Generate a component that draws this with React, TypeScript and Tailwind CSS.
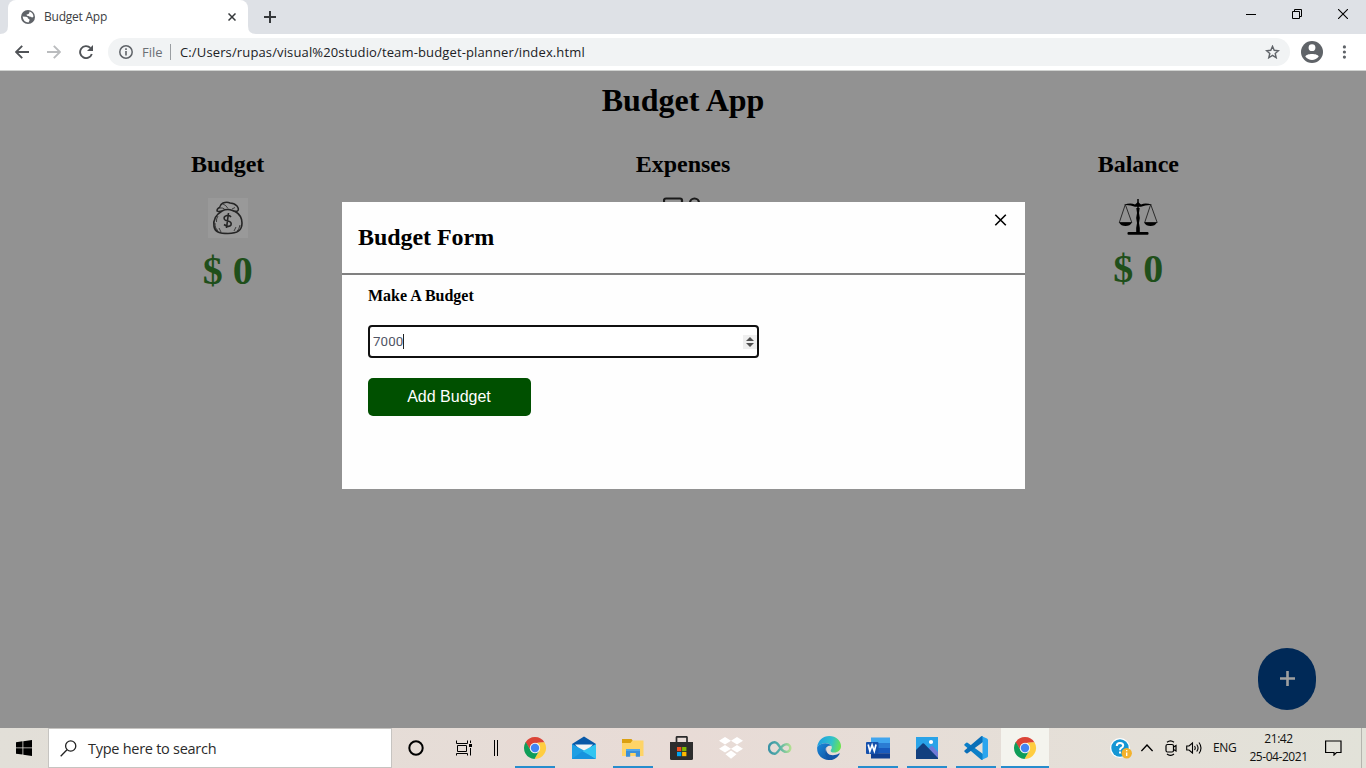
import type { ReactNode } from "react";

const UI = "font-['Open_Sans','Noto_Sans',sans-serif]";

function Chrome() {
  return (
    <svg width="24" height="24" viewBox="0 0 24 24">
      <path d="M2.47 6.5A11 11 0 0 1 21.53 6.5L12 7Q8 7 7.2 13.5Z" fill="#db4437" />
      <path d="M21.4 6.3A11 11 0 0 1 11.5 23L16.4 14.500Q17.500 11 14.500 6.800Z" fill="#ffcd40" />
      <path d="M2.600 6.300A11 11 0 0 0 11.500 23L16.330 14.500Q12 18.500 7.670 14.500L2.900 6.200Z" fill="#0f9d58" />
      <circle cx="12" cy="12" r="5.2" fill="#f1f1f1" />
      <circle cx="12" cy="12" r="4.2" fill="#4285f4" />
    </svg>
  );
}

function Mail() {
  return (
    <svg width="24" height="24" viewBox="0 0 24 24">
      <path d="M0 8 12 0.5 24 8V12H0Z" fill="#0959a8" />
      <path d="M3 8.5H21L12 18Z" fill="#f5f5f5" />
      <path d="M0 8 12 14.5 24 23H0Z" fill="#1d9fe4" />
      <path d="M24 8V23L10.5 15.2Z" fill="#31c5f1" />
      <path d="M10.5 15.2 24 23H0Z" fill="#128cdb" opacity=".6" />
    </svg>
  );
}

function Explorer() {
  return (
    <svg width="24" height="24" viewBox="0 0 24 24">
      <path d="M1 3H10.5L12 5H22V9H1Z" fill="#dba011" />
      <path d="M1 7H9.5L11.5 4.5H22.5V20H1Z" fill="#fed467" />
      <path d="M5 13H19V20.8H14.8V17H9.2V20.8H5Z" fill="#3a8fd8" />
      <path d="M5 13H19V15H5Z" fill="#54a8e8" />
    </svg>
  );
}

function Store() {
  return (
    <svg width="24" height="24" viewBox="0 0 24 24">
      <path d="M6.500 7V1.200Q6.500.8 7.300.8H16.200Q17 .8 17 1.200V7" fill="none" stroke="#2a2a2a" strokeWidth="1.700" />
      <path d="M0 6H23V22.5Q23 24 21.500 24H1.500Q0 24 0 22.5Z" fill="#2d2d2d" />
      <path d="M7 11H11.300V15.200H7Z" fill="#f25022" />
      <path d="M12.100 11H16.400V15.200H12.100Z" fill="#7fba00" />
      <path d="M7 16H11.300V20.200H7Z" fill="#00a4ef" />
      <path d="M12.100 16H16.400V20.200H12.100Z" fill="#ffb900" />
    </svg>
  );
}

function Dropbox() {
  return (
    <svg width="24" height="24" viewBox="0 0 24 24" fill="#fff">
      <path d="M6 1 12 4.8 6 8.6 0 4.8ZM18 1 24 4.8 18 8.6 12 4.8ZM6 9 12 12.8 6 16.6 0 12.8ZM18 9 24 12.8 18 16.6 12 12.8ZM12 14.5 17.5 18.3 12 22.8 6.5 18.3Z" />
    </svg>
  );
}

function Infinity() {
  return (
    <svg width="24" height="24" viewBox="0 0 24 24">
      <defs>
        <linearGradient id="inf">
          <stop offset="0" stopColor="#3b93a6" />
          <stop offset=".5" stopColor="#56b1a8" />
          <stop offset="1" stopColor="#b0df91" />
        </linearGradient>
      </defs>
      <path d="M12.5 12C10.5 8.5 9 6.2 6.700 6.2A5.8 5.8 0 0 0 6.700 17.8C10.5 17.8 12.5 8.3 18.5 8.3A3.8 3.8 0 0 1 18.5 15.9C16 15.9 14 14.2 12.5 12" fill="none" stroke="url(#inf)" strokeWidth="2.400" />
    </svg>
  );
}

function Edge() {
  return (
    <svg width="24" height="24" viewBox="0 0 24 24">
      <defs>
        <linearGradient id="edgeTop" x1="0" y1=".3" x2="1" y2=".5">
          <stop offset="0" stopColor="#1b9de2" />
          <stop offset=".6" stopColor="#32c2c9" />
          <stop offset="1" stopColor="#6be34f" />
        </linearGradient>
        <linearGradient id="edgeBot" x1="0" y1="0" x2="1" y2="1">
          <stop offset="0" stopColor="#1b8bdc" />
          <stop offset="1" stopColor="#0f4a98" />
        </linearGradient>
      </defs>
      <path d="M.2 11C1 4.2 6 0 12.3 0 19 0 24 4.7 24 10c0 4-3 6.5-6.7 6.5-2.7 0-4-1-3.6-2.1.6-1 1.1-1.6 1.1-2.8C14.8 9 12 7.3 8.6 7.3 4.5 7.3 1.5 9.2.2 11Z" fill="url(#edgeTop)" />
      <path d="M.2 11C2 8.3 5 7.2 8.4 7.2c3 0 5 1.2 6 2.8C11 8.6 8.3 11.5 8.3 14.5c0 4.5 4 8 8.3 7.2C15.300 23.200 13.500 24 11.500 24 5 24-.7 18.600.2 11Z" fill="url(#edgeBot)" />
      <path d="M9.300 11.500c-1.500 6 5.200 10.500 13 5.800.4 0 .5.400.3.700C20.500 21.500 17 24 13.800 24 9 23.200 6.500 16.500 9.300 11.500Z" fill="#1257a8" />
    </svg>
  );
}

function Word() {
  return (
    <svg width="24" height="24" viewBox="0 0 24 24">
      <path d="M5 1.500H24V7H5Z" fill="#41a5ee" />
      <path d="M5 7H24V12H5Z" fill="#2b7cd3" />
      <path d="M5 12H24V17.200H5Z" fill="#185abd" />
      <path d="M5 17.200H24V22.500H5Z" fill="#103f91" />
      <rect x="0" y="6" width="12.500" height="12" rx="1" fill="#1550ac" />
      <path d="m2.200 8.500 1.700 6.700 2.200-6.200 2.200 6.200 1.700-6.700" fill="none" stroke="#fff" strokeWidth="1.700" />
    </svg>
  );
}

function Photos() {
  return (
    <svg width="24" height="24" viewBox="0 0 24 24">
      <path d="M1 1H23V23H1Z" fill="#29a3e8" />
      <path d="m13 13 4-3.500 6 6.500V23H13Z" fill="#7079d6" />
      <path d="M1 14 7.500 7.500Q8.500 7 9.500 8L23 22V23H1Z" fill="#123f7e" />
      <circle cx="16" cy="6" r="2.100" fill="#fff" />
    </svg>
  );
}

function Code() {
  return (
    <svg width="24" height="24" viewBox="0 0 24 24">
      <path d="M.500 8.300 2.300 6.700Q3 6.300 3.600 6.800L19 18V23.500L17.500 24 .500 9.500Q0 8.900.500 8.300Z" fill="#0b7fc8" />
      <path d="M.500 15.700 2.300 17.300Q3 17.700 3.600 17.200L19 6V.500L17.500 0 .500 14.500Q0 15.100.500 15.700Z" fill="#0a6fb8" />
      <path d="M17.300 0 23 2.500Q24 3 24 4V20Q24 21 23 21.500L17.300 24Q18.500 23.300 18.500 22V2Q18.500.700 17.300 0Z" fill="#2ba5ee" />
    </svg>
  );
}

function Task({ children, open = false, active = false }: { children: ReactNode; open?: boolean; active?: boolean }) {
  return (
    <div className={active ? "ml-px flex h-10 w-12 flex-col items-center bg-[#f4f4ee]" : "flex h-10 w-[49px] flex-col items-center"}>
      <div className="flex h-[38px] items-center pt-[2px]">{children}</div>
      {open && <div className={active ? "h-[2px] w-full bg-[#278dcd]" : "h-[2px] w-10 bg-[#278dcd]"} />}
    </div>
  );
}

function TabStrip() {
  return (
    <div className="flex h-[34px] items-end bg-[#dee1e6] text-[#202124]">
      <svg width="8" height="34" viewBox="0 0 8 34"><path d="M0 34Q8 34 8 26V34Z" fill="#fff" /></svg>
      <div className="flex h-[34px] w-[240px] items-center rounded-t-lg bg-white pl-[13px]">
        <svg width="14" height="14" viewBox="0 0 14 14">
          <circle cx="7" cy="7" r="7" fill="#5f6368" />
          <path d="M1.600 6.500 5 6.700Q7 7 7 8.500 9 9 8.500 10.500L7.500 12.600Q2.400 12.300 1.600 6.500ZM8.500 1.600Q12 2.600 12.500 6.500 11 8.200 10 6.700 8.500 7 7.500 6 5.500 6 5.500 4.500 8.500 4.500 8.500 1.600Z" fill="#fff" />
        </svg>
        <span className={`${UI} ml-[9px] w-[184px] text-[12px] tracking-[-0.23px] text-[#3c4043]`}>Budget App</span>
        <svg width="8" height="8" viewBox="0 0 8 8"><path d="m.5.5 7 7M7.500.5.5 7.500" stroke="#35383b" strokeWidth="1.500" /></svg>
      </div>
      <svg width="8" height="34" viewBox="0 0 8 34"><path d="M8 34Q0 34 0 26V34Z" fill="#fff" /></svg>
      <svg className="ml-2 self-center" width="12" height="12" viewBox="0 0 12 12"><path d="M6 0V12M0 6H12" stroke="#35383b" strokeWidth="2" /></svg>
      <div className="ml-auto flex h-7 items-center gap-[36px] pr-[18px] self-start">
        <svg width="10" height="11" viewBox="0 0 10 11"><path d="M0 5.500H10" stroke="#000" /></svg>
        <svg width="10" height="11" viewBox="0 0 10 11" fill="none" stroke="#000"><path d="M.5 2.500H7.500V9.500H.5ZM2.500 2.500V.5H9.500V7.500H7.500" /></svg>
        <svg width="10" height="10" viewBox="0 0 10 10"><path d="m0 0 10 10M10 0 0 10" stroke="#000" strokeWidth="1.100" /></svg>
      </div>
    </div>
  );
}

function Toolbar() {
  return (
    <div className="flex h-[37px] items-center border-b border-[#d0d2d0] bg-white pl-[15px] pr-[20px]">
      <svg width="14" height="14" viewBox="0 0 14 14" fill="none" stroke="#505357" strokeWidth="1.900"><path d="M14 7H1.200M7.200.800 1 7 7.200 13.200" /></svg>
      <svg className="ml-[18px]" width="14" height="14" viewBox="0 0 14 14" fill="none" stroke="#babcbe" strokeWidth="1.900"><path d="M0 7H12.800M6.800.800 13 7 6.800 13.200" /></svg>
      <svg className="ml-[18px]" width="14" height="14" viewBox="0 0 14 14"><path d="M12.800 9A6 6 0 1 1 11.400 2.900" fill="none" stroke="#505357" strokeWidth="1.900" /><path d="M14 0V6H8Z" fill="#505357" /></svg>
      <div className={`${UI} ml-[15px] flex h-7 flex-1 items-center rounded-full bg-[#f1f3f4] pl-[11px] pr-[10px]`}>
        <svg width="14" height="14" viewBox="0 0 14 14"><circle cx="7" cy="7" r="6.200" fill="none" stroke="#5f6368" strokeWidth="1.500" /><path d="M7 6V10.500M7 3.300V4.900" stroke="#5f6368" strokeWidth="1.600" /></svg>
        <span className="ml-[9px] w-[28px] pt-px text-[13px] text-[#6b6f74]">File</span>
        <div className="h-4 w-px bg-[#9a9ea2]" />
        <span className="ml-[9px] pt-px text-[13px] tracking-[0.135px] text-[#202124]">C:/Users/rupas/visual%20studio/team-budget-planner/index.html</span>
        <svg className="ml-auto" width="15" height="14" viewBox="0 0 15 14"><path d="m7.500 1.300 1.700 4 4.300.400-3.300 2.800 1 4.200-3.700-2.300-3.700 2.300 1-4.200L1.500 5.700l4.300-.400Z" fill="none" stroke="#5f6368" strokeWidth="1.400" /></svg>
      </div>
      <svg className="ml-[11px]" width="22" height="22" viewBox="0 0 22 22"><circle cx="11" cy="11" r="11" fill="#5f6368" /><circle cx="11" cy="6.700" r="3.400" fill="#fff" /><path d="M4.300 15.500C5 12 17 12 17.700 15.500 14.500 20 7.500 20 4.300 15.500Z" fill="#fff" /></svg>
      <svg className="ml-[19px]" width="4" height="14" viewBox="0 0 4 14" fill="#5f6368"><circle cx="2.400" cy="1.900" r="1.600" /><circle cx="2.400" cy="7" r="1.600" /><circle cx="2.400" cy="12.100" r="1.600" /></svg>
    </div>
  );
}

function MoneyBag() {
  return (
    <div className="mt-[20px] size-10 bg-[#999]">
      <svg width="40" height="40" viewBox="0 0 40 40" fill="none" stroke="#252525" strokeWidth="1.300">
        <path d="M14 13C8 16.500 5 22 6 28.500c1.200 6 6 7 14 7 9 0 14-2.500 14-10.500 0-6.500-4-10-7.500-12" strokeWidth="1.600" />
        <path d="M9 13Q9 10.500 11.500 9.500 12 6.500 15 5 19 3.300 22 5 26 5 29 8q2.500 3.500.5 5-2.500 1-5-.5Q19 10.500 14 13q-3.500 1-5 0Z" strokeWidth="1.500" />
        <path d="M15 6q3 1 5 4.500M11.500 10q3-.5 5 1M27 9.500l-3 1.500" strokeWidth=".8" />
        <path d="M7 25q0 6 3 7.500M11 30l2 4M32 27q-1 5-3 6M28 29l-2 4M10 18q-2 3-1.500 6" strokeWidth=".8" />
        <path d="M23 19q-1.500-2-4-1.500-4 1-2.500 4 .5 1 3.500 1.500 4 1 3 4-2 3-7-.5M20.500 15 18.500 30" strokeWidth="1.600" />
      </svg>
    </div>
  );
}

function Scales() {
  return (
    <svg className="mt-[20px]" width="40" height="38" viewBox="0 0 40 38">
      <path d="M6 7Q12 4.500 17 6.500L20 4l3 2.500Q28 4.500 34 7 28 6.500 23 8.800H17Q12 6.500 6 7Z" />
      <path d="M20 1V35M20 8V33" fill="none" stroke="#000" strokeWidth="1.500" />
      <path d="M18.300 10h3.400l-.7 5 .8 5-.8 5 .8 5v5h-3.600v-5l.8-5-.8-5 .8-5Z" />
      <path d="m7.300 6.500-6 18h12.500ZM32.700 6.500l-6 18h12.500Z" fill="none" stroke="#111" strokeWidth=".8" />
      <path d="M1 24.500H14Q12 28 7.500 28T1 24.500ZM26 24.500H39Q37 28 32.500 28T26 24.500Z" />
      <rect x="9.500" y="34" width="21" height="2.800" rx="1" />
    </svg>
  );
}

function Column({ title, children, amount }: { title: string; children: ReactNode; amount: string }) {
  return (
    <div className="flex flex-1 flex-col items-center">
      <h2 className="text-[24px] leading-[28px] font-bold">{title}</h2>
      {children}
      <div className="mt-[10px] text-[40px] leading-[46px] font-bold text-[#1f4f1a]">{amount}</div>
    </div>
  );
}

function Modal() {
  return (
    <div className="absolute top-[131px] left-[342px] h-[287px] w-[683px] bg-[#fefefe]">
      <div className="flex h-[73px] justify-between border-b-2 border-[#808080] pr-[18px] pl-4">
        <h2 className="mt-[21px] text-[24px] leading-[28px] font-bold tracking-[-0.05px]">Budget Form</h2>
        <svg className="mt-[12px]" width="13" height="13" viewBox="0 0 13 13"><path d="m1.300.8 10.500 10.500M11.800.8 1.300 11.300" stroke="#000" strokeWidth="1.600" /></svg>
      </div>
      <div className="flex flex-col items-start pl-[26px]">
        <label className="mt-[12px] text-[16px] leading-[18px] font-bold">Make A Budget</label>
        <div className="mt-[20px] flex h-[33px] w-[391px] items-center rounded-[4px] border-2 border-[#101010] bg-white pl-[3px] font-['Roboto','Liberation_Sans',sans-serif] text-[13.33px] text-[#505565]">
          <span className="tracking-[0.1px]">7000</span>
          <span className="h-[15px] w-px bg-[#222]" />
          <div className="ml-auto flex h-[14px] w-[14px] items-center justify-center bg-[#efefef]">
            <svg width="8" height="10" viewBox="0 0 8 10" fill="#505050"><path d="M0 4 4 0 8 4ZM0 6 4 10 8 6Z" /></svg>
          </div>
        </div>
        <button className="mt-[20px] h-[38px] w-[163px] rounded-[5px] bg-[#005000] pr-px font-['Liberation_Sans',Arial,sans-serif] text-[16px] text-white">Add Budget</button>
      </div>
    </div>
  );
}

function Taskbar() {
  return (
    <div className={`${UI} flex h-10 items-center bg-linear-to-r from-[#e2dfd8] via-[#e8dbd6] to-[#e2e2d9] text-[#111]`}>
      <div className="flex w-12 justify-center">
        <svg width="16" height="16" viewBox="0 0 16 16"><path d="M0 2.200 6.500 1.300V7.500H0ZM7.300 1.200 16 0V7.500H7.300ZM0 8.300H6.500V14.600L0 13.700ZM7.300 8.300H16V16L7.300 14.700Z" /></svg>
      </div>
      <div className="flex h-10 w-[344px] items-center border border-[#c6c4c1] bg-white pl-[11px]">
        <svg width="17" height="17" viewBox="0 0 17 17" fill="none" stroke="#222" strokeWidth="1.300"><circle cx="10.700" cy="6" r="5.100" /><path d="M7 9.700.7 16.200" /></svg>
        <span className="ml-[11px] pt-px text-[14.5px] tracking-[-0.27px] text-[#2b2b2b]">Type here to search</span>
      </div>
      <div className="flex w-12 justify-center"><svg width="16" height="16" viewBox="0 0 16 16"><circle cx="8" cy="8" r="6.700" fill="none" stroke="#000" strokeWidth="2" /></svg></div>
      <div className="flex w-12 justify-center">
        <svg width="17" height="16" viewBox="0 0 17 16" fill="none" stroke="#000" strokeWidth="1"><path d="M.5.5V3.500H11.500V.5M1.500 5.500H10.500V11.500H1.500ZM.5 15.500V13.500H11.500V15.500M14.500.5V3M14.500 8V15.500" /><path d="M13 4H16V7H13Z" fill="#000" stroke="none" /></svg>
      </div>
      <div className="flex w-[22px] justify-start pl-[5px]"><svg width="6" height="16" viewBox="0 0 6 16"><path d="M1.500 0V16M4.500 0V16" stroke="#000" strokeWidth="1" /></svg></div>
      <Task open><Chrome /></Task>
      <Task><Mail /></Task>
      <Task open><Explorer /></Task>
      <Task><Store /></Task>
      <Task><Dropbox /></Task>
      <Task><Infinity /></Task>
      <Task><Edge /></Task>
      <Task open><Word /></Task>
      <Task open><Photos /></Task>
      <Task open><Code /></Task>
      <Task open active><Chrome /></Task>
      <div className="ml-auto flex h-10 items-center">
        <svg width="22" height="22" viewBox="0 0 22 22">
          <circle cx="10" cy="11" r="10" fill="#fff" />
          <circle cx="10" cy="11" r="8.700" fill="#1496d4" />
          <path d="M6.800 9q0-3 3.200-3t3.200 2.500Q13.200 10 11 11.200q-1 .6-1 2M10 14.600v2" fill="none" stroke="#fff" strokeWidth="2" />
          <circle cx="16.700" cy="16.300" r="5.200" fill="#f3b22c" /><path d="M16.700 15.500V19M16.700 13V14.300" stroke="#fff" strokeWidth="1.300" />
        </svg>
        <svg className="ml-[9px]" width="12" height="8" viewBox="0 0 12 8"><path d="M.4 7 6 1 11.600 7" fill="none" stroke="#000" strokeWidth="1.400" /></svg>
        <svg className="ml-[12px]" width="12" height="16" viewBox="0 0 12 16" fill="none" stroke="#000" strokeWidth="1.200"><rect x="1" y="4.500" width="7.500" height="7.500" rx="1.500" /><path d="M8.500 7 11 5.500V11L8.500 9.500M2 2.200Q5.500-.6 9 2.200M2 14Q5.500 16.800 9 14" /></svg>
        <svg className="ml-[9px]" width="17" height="14" viewBox="0 0 17 14" fill="none" stroke="#000" strokeWidth="1.100"><path d="M.7 5H3L6.500 2V12L3 9H.7ZM8.500 5q1.500 2 0 4M10.700 3.500q2.700 3.500 0 7M13 1.500q4 5.500 0 11" /></svg>
        <span className="ml-[10px] w-[36px] text-[12px] tracking-[-0.3px]">ENG</span>
        <div className="flex w-[59px] flex-col items-center text-[12px] leading-[18px] tracking-[-0.45px] whitespace-nowrap">
          <span>21:42</span>
          <span>25-04-2021</span>
        </div>
        <svg className="ml-[17px]" width="17" height="16" viewBox="0 0 17 16"><path d="M.6 1H16V12.500H11.500L9 15V12.500H.6Z" fill="none" stroke="#000" strokeWidth="1.200" /></svg>
        <div className="mr-1 ml-[19px] h-10 w-px bg-[#b5b4ae]" />
      </div>
    </div>
  );
}

export default function App() {
  return (
    <div className="flex h-[768px] w-[1366px] flex-col overflow-hidden bg-white">
      <TabStrip />
      <Toolbar />
      <main className="relative h-[657px] bg-[#929292] font-['Liberation_Serif','Times_New_Roman',serif] text-black">
        <h1 className="pt-[11px] text-center text-[32px] leading-[37px] font-bold">Budget App</h1>
        <section className="mt-[31px] flex">
          <Column title="Budget" amount="$ 0"><MoneyBag /></Column>
          <Column title="Expenses" amount="$ 0">
            <svg className="mt-[19px]" width="40" height="40" viewBox="0 0 40 40" fill="none" stroke="#1a1a1a" strokeWidth="2.200"><rect x="1" y="1.500" width="18" height="36" rx="2" /><circle cx="31.500" cy="6" r="4.500" /></svg>
          </Column>
          <Column title="Balance" amount="$ 0"><Scales /></Column>
        </section>
        <Modal />
        <button className="absolute top-[577px] left-[1258px] flex h-[62px] w-[58px] items-center justify-center rounded-[29px] bg-[#002957] pb-px">
          <svg width="15" height="15" viewBox="0 0 15 15"><path d="M7.500 0V15M0 7.500H15" stroke="#a0a0a0" strokeWidth="2.600" /></svg>
        </button>
      </main>
      <Taskbar />
    </div>
  );
}
